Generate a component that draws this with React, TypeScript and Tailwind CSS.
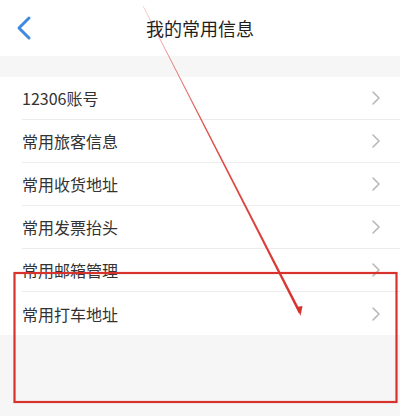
import React from "react";

const items = ["12306账号", "常用旅客信息", "常用收货地址", "常用发票抬头", "常用邮箱管理", "常用打车地址"];

function Chevron() {
  return (
    <svg width="10" height="16" viewBox="0 0 10 16" className="shrink-0">
      <path d="M2 2 L8 8 L2 14" fill="none" stroke="#b8b8b8" strokeWidth="1.6" strokeLinecap="round" strokeLinejoin="round" />
    </svg>
  );
}

export default function App() {
  return (
    <div
      className="relative w-[400px] h-[416px] overflow-hidden bg-[#f6f6f6]"
      style={{ fontFamily: '"Noto Sans CJK SC", "Noto Sans", sans-serif' }}
    >
      <div className="relative h-[56px] bg-white flex items-center justify-center">
        <svg width="20" height="26" viewBox="0 0 20 26" className="absolute left-[14px] top-[15px]">
          <path d="M15 3 L5 13 L15 23" fill="none" stroke="#3f8ae0" strokeWidth="3" strokeLinecap="round" strokeLinejoin="round" />
        </svg>
        <span className="text-[18px] text-[#1e1e1e] leading-none">我的常用信息</span>
      </div>
      <div className="h-[21px]" />
      <div className="bg-white">
        {items.map((t, i) => (
          <div key={t} className="pl-[22px]">
            <div
              className={
                "h-[43px] flex items-center justify-between pr-[19px] " +
                (i < items.length - 1 ? "border-b border-[#ececec]" : "")
              }
            >
              <span className="text-[16px] text-[#333] leading-none">{t}</span>
              <Chevron />
            </div>
          </div>
        ))}
      </div>
      <svg width="400" height="416" className="absolute left-0 top-0 pointer-events-none">
        <defs>
          <linearGradient id="lg" x1="0" y1="0" x2="0" y2="1">
            <stop offset="0" stopColor="#d8322c" stopOpacity="0.35" />
            <stop offset="0.4" stopColor="#d8322c" stopOpacity="0.85" />
            <stop offset="1" stopColor="#d8322c" stopOpacity="1" />
          </linearGradient>
        </defs>
        <path d="M142.8 6 L143.4 6 L301 312 L298.6 313 Z" fill="url(#lg)" />
        <path d="M296.5 307 L300.5 316 L302.5 306 Z" fill="#d8322c" />
        <rect x="14.5" y="273" width="382" height="129" fill="none" stroke="#d8322c" strokeWidth="2.2" />
      </svg>
    </div>
  );
}
